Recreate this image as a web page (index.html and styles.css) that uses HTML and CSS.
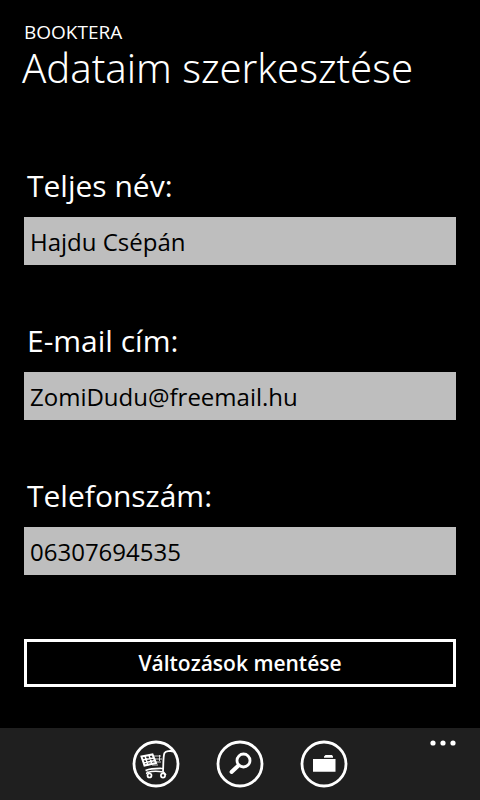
FILE: index.html
```html
<!DOCTYPE html>
<html lang="hu">
<head>
<meta charset="utf-8">
<meta name="viewport" content="width=device-width, initial-scale=1">
<title>BookTera</title>
<link rel="stylesheet" href="styles.css">
</head>
<body>
<header class="header">
  <p class="app-name">BOOKTERA</p>
  <h1 class="title">Adataim szerkesztése</h1>
</header>
<main class="content">
  <form class="form">
    <div class="field">
      <label class="label" for="name">Teljes név:</label>
      <input class="input" id="name" type="text" value="Hajdu Csépán">
    </div>
    <div class="field">
      <label class="label" for="email">E-mail cím:</label>
      <input class="input" id="email" type="email" value="ZomiDudu@freemail.hu">
    </div>
    <div class="field">
      <label class="label" for="phone">Telefonszám:</label>
      <input class="input" id="phone" type="tel" value="06307694535">
    </div>
    <button class="save" type="button">Változások mentése</button>
  </form>
</main>
<nav class="appbar">
  <button class="icon-button" type="button" aria-label="Kosár">
    <svg viewBox="0 0 48 48" width="48" height="48" fill="none" stroke="#fff">
      <circle cx="24" cy="24" r="22" stroke-width="2.8"/>
      <path d="M41 11.500L38 10.800C36 11.500 34 11 32.500 13C31 16 31.500 25 31 31.500" stroke-width="1.8"/>
      <path d="M9.500 16.500L20.500 14.500L24 23L12.500 25.500Z" stroke-width="2"/>
      <path d="M10 20L22 18M11.500 23L23 20.500M13 16L16 25.500M17 15.500L20 24.500" stroke-width="1.500"/>
      <path d="M21 16H29M22 19H30M23 22H29M20 25H26M27.5 15V21" stroke-width=".8"/>
      <path d="M13.500 30.5C20 28 26 28.5 32 28.500M15.5 32.500C20 31 26 31 31 32" stroke-width="1.7"/>
      <path d="M15.5 31.5L14.5 34M31 31.5L34 35" stroke-width="1.5"/>
      <circle cx="17.5" cy="35.5" r="2" stroke-width="1.7"/>
      <circle cx="31" cy="35.5" r="2.1" stroke-width="1.7"/>
    </svg>
  </button>
  <button class="icon-button" type="button" aria-label="Keresés">
    <svg viewBox="0 0 48 48" width="48" height="48" fill="none" stroke="#fff">
      <circle cx="24" cy="24" r="22" stroke-width="2.8"/>
      <circle cx="27.5" cy="20.5" r="6.5" stroke-width="2.8"/>
      <path d="M22.5 25.5L15.5 32" stroke-width="4" stroke-linecap="round"/>
    </svg>
  </button>
  <button class="icon-button" type="button" aria-label="Mappa">
    <svg viewBox="0 0 48 48" width="48" height="48">
      <circle cx="24" cy="24" r="22" fill="none" stroke="#fff" stroke-width="2.8"/>
      <path d="M13 19H35.5V31.7H13ZM24 17.8V16.5L25.5 15H32L33 16.5V17.8Z" fill="#fff"/>
    </svg>
  </button>
  <button class="more" type="button" aria-label="Továbbiak">
    <svg viewBox="0 0 26 6" width="26" height="6" fill="#fff">
      <circle cx="3" cy="3" r="2.6"/><circle cx="13" cy="3" r="2.6"/><circle cx="23" cy="3" r="2.6"/>
    </svg>
  </button>
</nav>
</body>
</html>
```
FILE: styles.css
```css
* {
  box-sizing: border-box;
}

body {
  margin: 0;
  min-height: 100vh;
  display: flex;
  flex-direction: column;
  background: #000;
  color: #fff;
  font-family: "Open Sans", "Noto Sans", sans-serif;
}

.header {
  padding: 20px 22px 0;
}

.app-name {
  margin: 0 2px;
  font-size: 19px;
  line-height: 24px;
}

.title {
  margin: 0;
  font-family: "Noto Sans", "Open Sans", sans-serif;
  font-size: 40px;
  font-weight: 350;
  line-height: 48px;
  white-space: nowrap;
}

.content {
  flex: 1;
  padding: 72px 24px 40px;
}

.form {
  display: flex;
  flex-direction: column;
}

.field {
  display: flex;
  flex-direction: column;
  margin-bottom: 54px;
}

.label {
  padding: 0 3px;
  margin-bottom: 10px;
  font-size: 30px;
  line-height: 43px;
}

.input {
  width: 100%;
  height: 48px;
  padding: 0 6px;
  border: 0;
  border-radius: 0;
  background: #bebebe;
  color: #000;
  font-family: inherit;
  font-size: 24px;
}

.save {
  height: 48px;
  margin-top: 10px;
  padding: 0;
  border: 3px solid #fff;
  background: #000;
  color: #fff;
  font-family: inherit;
  font-size: 21px;
  font-weight: 600;
}

.appbar {
  position: relative;
  display: flex;
  justify-content: center;
  gap: 36px;
  height: 72px;
  padding-top: 12px;
  background: #1f1f1f;
}

.icon-button,
.more {
  display: block;
  padding: 0;
  border: 0;
  background: none;
}

.icon-button {
  width: 48px;
  height: 48px;
}

.icon-button svg,
.more svg {
  display: block;
}

.more {
  position: absolute;
  top: 12px;
  right: 24px;
}
```
